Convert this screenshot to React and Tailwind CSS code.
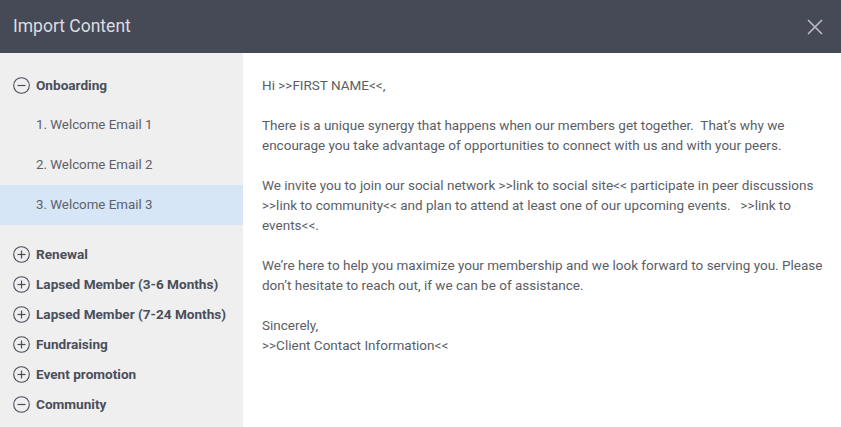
import { X } from 'lucide-react'

function CircleIcon({ open }) {
  return (
    <svg width="17" height="17" viewBox="0 0 17 17" className="shrink-0">
      <circle cx="8.5" cy="8.5" r="7.8" fill="none" stroke="#4a4e5a" strokeWidth="1.1" />
      <path d="M4.5 8.5h8" stroke="#4a4e5a" strokeWidth="1.2" />
      {!open && <path d="M8.5 4.5v8" stroke="#4a4e5a" strokeWidth="1.2" />}
    </svg>
  )
}

const groups = [
  'Renewal',
  'Lapsed Member (3-6 Months)',
  'Lapsed Member (7-24 Months)',
  'Fundraising',
  'Event promotion',
]

export default function App() {
  return (
    <div className="w-[841px] h-[427px] flex flex-col overflow-hidden bg-white font-['Roboto',sans-serif]">
      {/* Header */}
      <header className="h-[53px] shrink-0 bg-[#464a56] flex items-center justify-between pl-[13px] pr-[13px]">
        <span className="text-[17.5px] text-[#dcdde0]">Import Content</span>
        <X size={26} strokeWidth={1.6} className="text-[#b8bac0]" />
      </header>

      <div className="flex flex-1 min-h-0">
        {/* Sidebar */}
        <aside className="w-[243px] shrink-0 bg-[#efefef] pt-[12px]">
          <div className="h-[40px] flex items-center gap-[6px] pl-[13px]">
            <CircleIcon open />
            <span className="text-[13.6px] font-bold text-[#4a4e5a]">Onboarding</span>
          </div>
          {['1. Welcome Email 1', '2. Welcome Email 2', '3. Welcome Email 3'].map((t, i) => (
            <div
              key={t}
              className={`h-[40px] flex items-center pl-[36px] text-[13.3px] text-[#5e6169] ${i === 2 ? 'bg-[#d6e6f7]' : ''}`}
            >
              {t}
            </div>
          ))}
          <div className="pt-[14px]">
            {groups.map((g) => (
              <div key={g} className="h-[30px] flex items-center gap-[6px] pl-[13px]">
                <CircleIcon />
                <span className="text-[13.6px] font-bold text-[#4a4e5a]">{g}</span>
              </div>
            ))}
            <div className="h-[30px] flex items-center gap-[6px] pl-[13px]">
              <CircleIcon open />
              <span className="text-[13.6px] font-bold text-[#4a4e5a]">Community</span>
            </div>
          </div>
        </aside>

        {/* Content */}
        <main className="flex-1 pl-[19px] pt-[22px] text-[13.5px] leading-[20px] text-[#5b5e66] whitespace-nowrap space-y-[20px]">
          <p>Hi &gt;&gt;FIRST NAME&lt;&lt;,</p>
          <p>
            There is a unique synergy that happens when our members get together.&nbsp; That’s why we
            <br />
            encourage you take advantage of opportunities to connect with us and with your peers.
          </p>
          <p>
            We invite you to join our social network &gt;&gt;link to social site&lt;&lt; participate in peer discussions
            <br />
            &gt;&gt;link to community&lt;&lt; and plan to attend at least one of our upcoming events.&nbsp;&nbsp; &gt;&gt;link to
            <br />
            events&lt;&lt;.
          </p>
          <p>
            We’re here to help you maximize your membership and we look forward to serving you. Please
            <br />
            don’t hesitate to reach out, if we can be of assistance.
          </p>
          <p>
            Sincerely,
            <br />
            &gt;&gt;Client Contact Information&lt;&lt;
          </p>
        </main>
      </div>
    </div>
  )
}
